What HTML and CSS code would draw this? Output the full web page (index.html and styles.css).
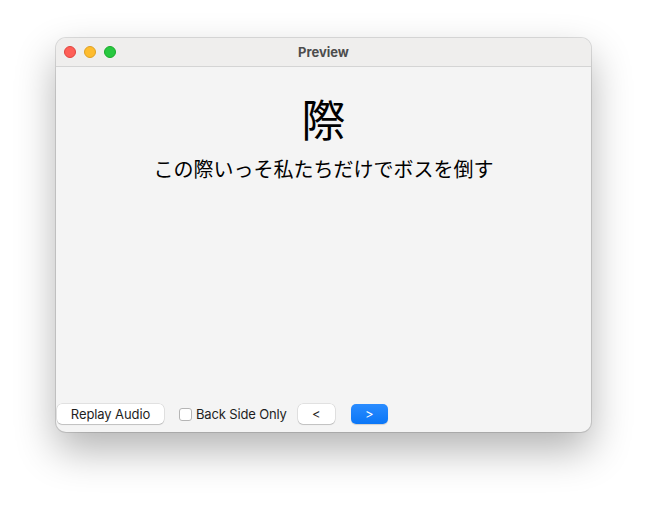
FILE: index.html
```html
<!DOCTYPE html>
<html lang="ja">
<head>
<meta charset="utf-8">
<link rel="stylesheet" href="styles.css">
</head>
<body>
<div class="window">
  <div class="titlebar">
    <div class="lights">
      <span class="light red"></span>
      <span class="light yellow"></span>
      <span class="light green"></span>
    </div>
    <div class="title">Preview</div>
  </div>
  <div class="content">
    <div class="card">
      <div class="word">際</div>
      <div class="sentence">この際いっそ私たちだけでボスを倒す</div>
    </div>
    <div class="controls">
      <button class="btn replay">Replay Audio</button>
      <label class="check"><span class="box"></span>Back Side Only</label>
      <button class="btn nav">&lt;</button>
      <button class="btn nav primary">&gt;</button>
    </div>
  </div>
</div>
</body>
</html>
```
FILE: styles.css
```css
html, body {
  margin: 0;
  padding: 0;
  background: #ffffff;
}
body {
  width: 647px;
  height: 506px;
  padding: 38px 0 0 56px;
  box-sizing: border-box;
  font-family: Inter, "Noto Sans CJK JP", sans-serif;
}
.window {
  width: 535px;
  height: 394px;
  border-radius: 10px;
  background: #f4f4f4;
  box-shadow: 0 0 0 1px rgba(0,0,0,0.12), 0 18px 40px rgba(0,0,0,0.30);
  display: flex;
  flex-direction: column;
  overflow: hidden;
}
.titlebar {
  height: 29px;
  flex: none;
  background: #efeeed;
  border-bottom: 1px solid #d4d4d4;
  box-sizing: border-box;
  display: flex;
  align-items: center;
  position: relative;
}
.lights {
  display: flex;
  gap: 8px;
  padding-left: 8px;
}
.light {
  width: 12px;
  height: 12px;
  border-radius: 50%;
  box-sizing: border-box;
}
.red { background: #fe5f57; border: 0.5px solid #e0443e; }
.yellow { background: #febc2e; border: 0.5px solid #dea123; }
.green { background: #28c840; border: 0.5px solid #1aab29; }
.title {
  position: absolute;
  left: 0;
  right: 0;
  text-align: center;
  font-size: 13px;
  font-weight: 700;
  color: #4d4d4d;
}
.content {
  flex: 1;
  display: flex;
  flex-direction: column;
}
.card {
  flex: 1;
  display: flex;
  flex-direction: column;
  align-items: center;
  padding-top: 23px;
  font-family: "Noto Sans CJK JP", sans-serif;
  color: #000;
}
.word {
  font-size: 44px;
  line-height: 56px;
}
.sentence {
  font-size: 20px;
  line-height: 26px;
  margin-top: 10px;
}
.controls {
  display: flex;
  align-items: center;
  padding: 0 0 8px 1px;
  height: 20px;
}
.btn {
  font-family: Inter, sans-serif;
  font-size: 13px;
  letter-spacing: -0.1px;
  height: 20px;
  border: none;
  border-radius: 5px;
  background: #ffffff;
  color: #1e1e1e;
  box-shadow: 0 0 0 0.5px rgba(0,0,0,0.15), 0 1px 1px rgba(0,0,0,0.15);
  padding: 0;
}
.replay { width: 107px; }
.check {
  display: flex;
  align-items: center;
  margin-left: 15px;
  font-size: 13px;
  letter-spacing: -0.15px;
  color: #1e1e1e;
}
.box {
  width: 13px;
  height: 13px;
  border-radius: 3px;
  background: #fff;
  border: 1px solid #b5b5b5;
  box-sizing: border-box;
  margin-right: 4px;
}
.nav {
  width: 37px;
  margin-left: 11px;
}
.primary {
  background: linear-gradient(#2a8cff, #0a76f7);
  color: #fff;
  margin-left: 16px;
  box-shadow: 0 1px 1px rgba(0,0,0,0.15);
}
```
